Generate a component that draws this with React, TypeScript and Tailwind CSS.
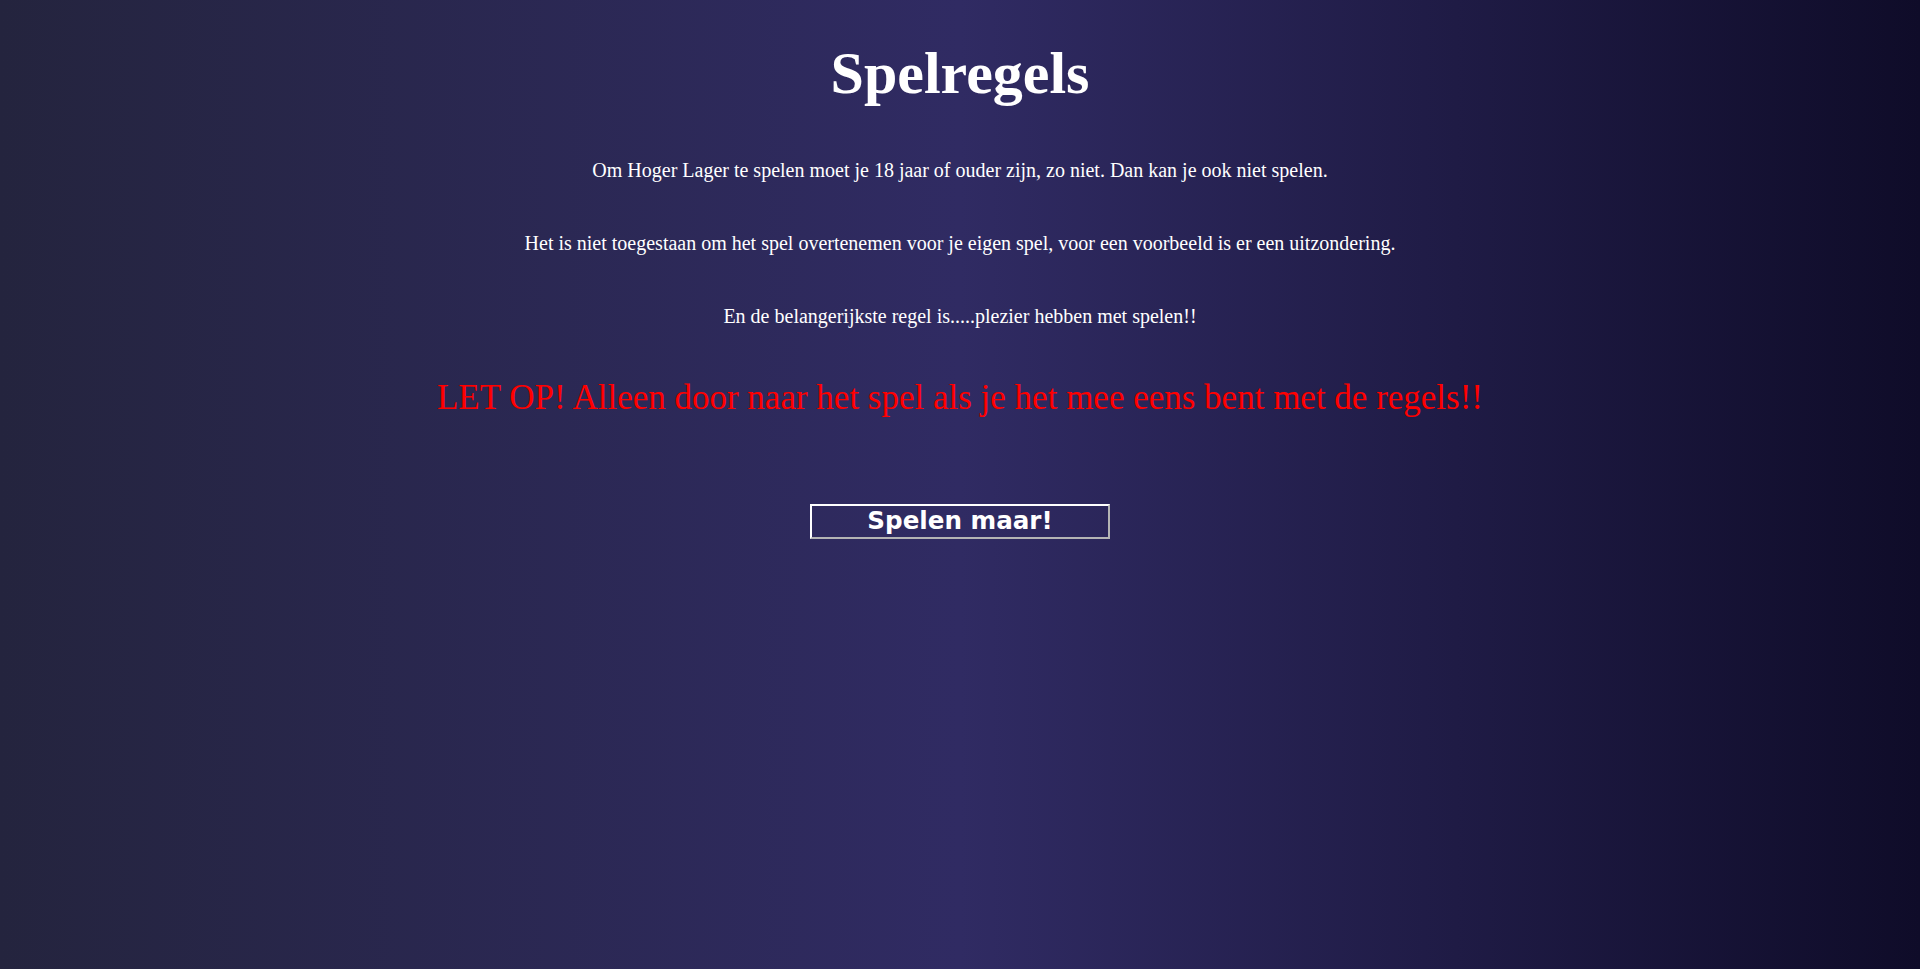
export default function App() {
  return (
    <div className="min-h-screen w-full flex flex-col items-center bg-[linear-gradient(to_right,#24243e,#302b63,#0f0c29)] font-['Liberation_Serif','Times_New_Roman',serif] text-white">
      <h1 className="mt-[40px] text-[60px] leading-[66px] font-bold">Spelregels</h1>

      <div className="mt-[52px] flex flex-col items-center gap-[49px] text-[20px] leading-[24px]">
        <p>Om Hoger Lager te spelen moet je 18 jaar of ouder zijn, zo niet. Dan kan je ook niet spelen.</p>
        <p>Het is niet toegestaan om het spel overtenemen voor je eigen spel, voor een voorbeeld is er een uitzondering.</p>
        <p>En de belangerijkste regel is.....plezier hebben met spelen!!</p>
      </div>

      <p className="mt-[50px] text-[35px] leading-[40px] text-[#ff0000]">
        LET OP! Alleen door naar het spel als je het mee eens bent met de regels!!
      </p>

      <button className="mt-[86px] w-[300px] h-[35px] border-2 border-t-white border-l-white border-b-[#b4b4b4] border-r-[#b4b4b4] bg-transparent text-white font-['DejaVu_Sans',Verdana,sans-serif] font-bold text-[24.6px] leading-none">
        Spelen maar!
      </button>
    </div>
  );
}
